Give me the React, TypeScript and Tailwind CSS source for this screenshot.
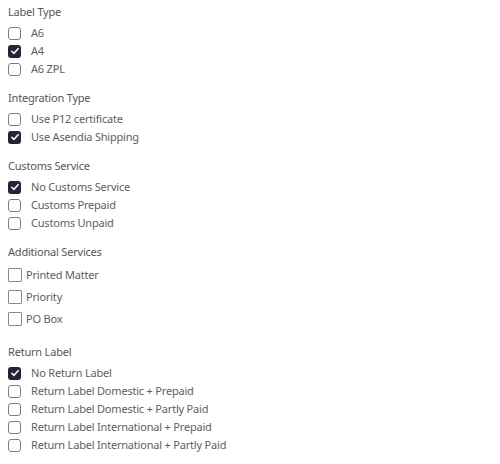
import React from 'react';

type Opt = { label: string; checked?: boolean };

function Check({ checked, square }: { checked?: boolean; square?: boolean }) {
    if (checked) {
        return (
            <span className="flex items-center justify-center w-[13px] h-[13px] rounded-[3px] bg-[#22243a] shrink-0">
                <svg viewBox="0 0 12 12" className="w-[10px] h-[10px]">
                    <path d="M2.2 6.3 L4.8 8.8 L9.8 3.2" fill="none" stroke="#fff" strokeWidth="1.9" strokeLinecap="round" strokeLinejoin="round" />
                </svg>
            </span>
        );
    }
    return (
        <span
            className={
                square
                    ? 'block w-[14px] h-[14px] rounded-[1px] border border-[#8a8a8a] bg-white shrink-0'
                    : 'block w-[13px] h-[13px] rounded-[3px] border border-[#7d7d7d] bg-white shrink-0'
            }
        />
    );
}

function Section({ title, options, square, className }: { title: string; options: Opt[]; square?: boolean; className?: string }) {
    return (
        <section className={className}>
            <h3 className="h-4 leading-4 mb-1 text-[11px] tracking-[-0.2px] text-[#555]">{title}</h3>
            <div>
                {options.map((o) => (
                    <label
                        key={o.label}
                        className={
                            square
                                ? 'flex items-center gap-[4px] h-[22px] text-[11px] tracking-[-0.2px] text-[#5e5e5e]'
                                : 'flex items-center gap-[10px] h-[18px] text-[11px] tracking-[-0.2px] text-[#5e5e5e]'
                        }
                    >
                        <Check checked={o.checked} square={square} />
                        <span>{o.label}</span>
                    </label>
                ))}
            </div>
        </section>
    );
}

export default function App() {
    return (
        <div className="w-[500px] h-[464px] bg-white pl-2 pt-1 flex flex-col gap-3 font-['Noto_Sans',sans-serif]">
            <Section title="Label Type" options={[{ label: 'A6' }, { label: 'A4', checked: true }, { label: 'A6 ZPL' }]} />
            <Section
                title="Integration Type"
                options={[{ label: 'Use P12 certificate' }, { label: 'Use Asendia Shipping', checked: true }]}
            />
            <Section
                title="Customs Service"
                options={[{ label: 'No Customs Service', checked: true }, { label: 'Customs Prepaid' }, { label: 'Customs Unpaid' }]}
            />
            <Section
                title="Additional Services"
                square
                options={[{ label: 'Printed Matter' }, { label: 'Priority' }, { label: 'PO Box' }]}
            />
            <Section
                title="Return Label"
                className="mt-0.5"
                options={[
                    { label: 'No Return Label', checked: true },
                    { label: 'Return Label Domestic + Prepaid' },
                    { label: 'Return Label Domestic + Partly Paid' },
                    { label: 'Return Label International + Prepaid' },
                    { label: 'Return Label International + Partly Paid' },
                ]}
            />
        </div>
    );
}
